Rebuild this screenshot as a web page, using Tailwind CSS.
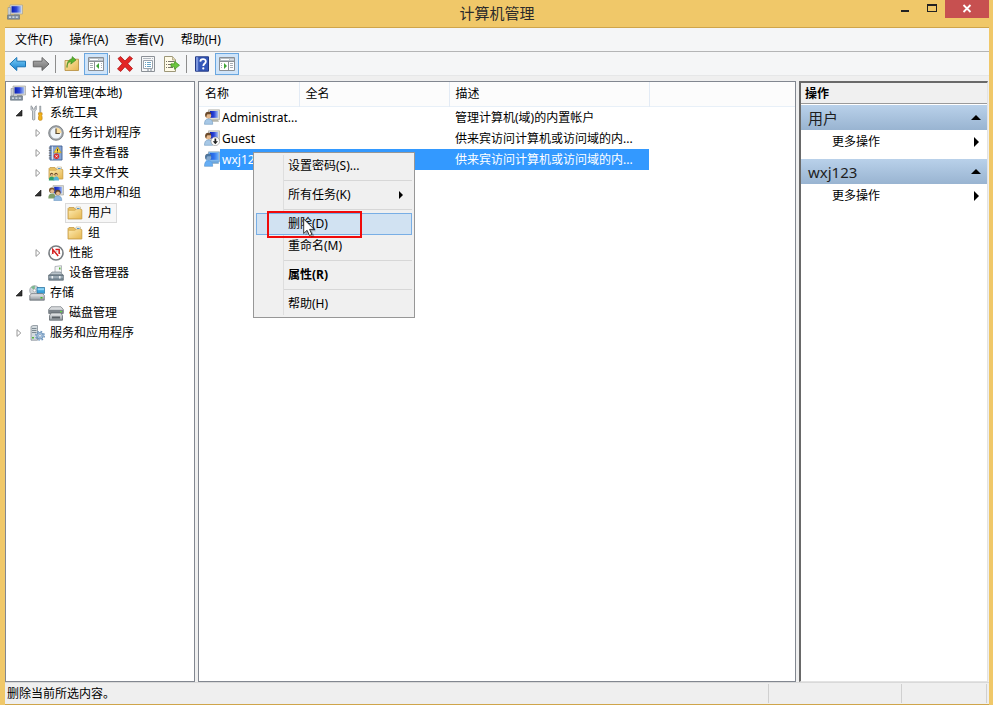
<!DOCTYPE html>
<html lang="zh-CN">
<head>
  <meta charset="UTF-8" />
  <meta name="viewport" content="width=device-width, initial-scale=1.0" />
  <title>计算机管理</title>
  <script src="https://cdn.jsdelivr.net/npm/@tailwindcss/browser@4"></script>
</head>
<body class="h-screen overflow-hidden bg-[#f0c869] font-['Noto_Sans','Noto_Sans_CJK_SC',sans-serif] text-xs text-black cursor-default">

  <!-- Shared icons -->
  <svg class="absolute w-0 h-0" aria-hidden="true">
    <defs>
      <linearGradient id="gScreen" x1="0" y1="0" x2="1" y2="0"><stop offset="0" stop-color="#0a1fb0" /><stop offset=".5" stop-color="#2b45d8" /><stop offset="1" stop-color="#a9c4f5" /></linearGradient>
      <linearGradient id="gFolder" x1="0" y1="0" x2="1" y2="1"><stop offset="0" stop-color="#fdeab0" /><stop offset="1" stop-color="#e6b750" /></linearGradient>
      <linearGradient id="gBlue" x1="0" y1="0" x2="0" y2="1"><stop offset="0" stop-color="#7fd0f7" /><stop offset="1" stop-color="#1580cf" /></linearGradient>
      <linearGradient id="gGray" x1="0" y1="0" x2="0" y2="1"><stop offset="0" stop-color="#b5b5b5" /><stop offset="1" stop-color="#6e6e6e" /></linearGradient>
      <linearGradient id="gMetal" x1="0" y1="0" x2="0" y2="1"><stop offset="0" stop-color="#f0f1f2" /><stop offset="1" stop-color="#8d949b" /></linearGradient>
    </defs>
    <symbol id="computer" viewBox="0 0 16 16">
      <path d="M3 1h12.5v9H3z" fill="#dcdcd4" stroke="#9b9b95" stroke-width=".6" />
      <path d="M4.5 2.2h9.8v6.4H4.5z" fill="url(#gScreen)" />
      <path d="M7 10h5l1 1.6H7z" fill="#a5a59c" />
      <path d="M1 3.5h2.6V11H1z" fill="#c9ced4" stroke="#858c94" stroke-width=".5" />
      <path d="M.5 11.2h12v4H.5z" fill="#8292a3" stroke="#5c6976" stroke-width=".6" />
      <path d="M2 13.2h2m1.4 0h2m1.4 0h2" stroke="#e8edf2" stroke-width="1.3" />
    </symbol>
    <symbol id="user" viewBox="0 0 16 16">
      <path d="M4.5 .8h11v9.8h-11z" fill="#deded6" stroke="#a0a098" stroke-width=".6" />
      <path d="M5.8 2h8.4v6.8H5.8z" fill="url(#gScreen)" />
      <path d="M8 10.800h6l1 2H8z" fill="#b4b4aa" />
      <path d="M.5 15.300c0-4 1.600-5.500 4-5.500s4.200 1.500 4.200 5.500z" fill="#a7c8e6" stroke="#6f97bd" stroke-width=".6" />
      <circle cx="4.300" cy="6.400" r="2.900" fill="#e6b98c" />
      <path d="M1.200 7C.6 3.800 2.500 2.500 4.500 2.700c1.800.1 2.900 1.200 2.600 2.600-2 .2-3-.4-3.900.2-.6.5-.5 2-1.100 3z" fill="#6a4a2c" />
    </symbol>
    <symbol id="folder" viewBox="0 0 16 16">
      <path d="M1 14V3.500l1-1h5l1.200 1.600H14l.8.8V14z" fill="#e7bf62" stroke="#bd9440" stroke-width=".7" />
      <path d="M9 2h4.500v4H9z" fill="#f8fafc" stroke="#b2a071" stroke-width=".5" />
      <path d="M10 3.500h2.600" stroke="#4b94d0" stroke-width="1" />
      <path d="M1.400 5.400h6.400l1.200-1h5.600v9.200H1.400z" fill="url(#gFolder)" stroke="#cfa54c" stroke-width=".5" />
    </symbol>
    <symbol id="open" viewBox="0 0 8 8"><path d="M7 1v6H1z" fill="#333" stroke="#111" stroke-width=".6" /></symbol>
    <symbol id="closed" viewBox="0 0 8 8"><path d="M2 .6L5.800 4 2 7.400z" fill="#fff" stroke="#8c8c8c" stroke-width=".9" /></symbol>
  </svg>

  <div class="h-full flex flex-col pl-[5px] pr-1">
    <!-- Title bar -->
    <header class="h-[27px] shrink-0 grid grid-cols-[1fr_auto_1fr] items-start">
      <svg class="w-4 h-4 ml-0.5 mt-1"><use href="#computer" /></svg>
      <h1 class="text-[15px] leading-[26px] text-[#2b2b2b]">计算机管理</h1>
      <div class="flex justify-end">
        <button aria-label="最小化" class="w-[27px] h-[18px] flex items-center justify-center"><svg class="w-3 h-3" viewBox="0 0 12 12"><path d="M2 7h8v2H2z" fill="#222" /></svg></button>
        <button aria-label="最大化" class="w-[27px] h-[18px] flex items-center justify-center"><svg class="w-3 h-3" viewBox="0 0 12 12"><path d="M1 1h10v8H1zM2 3v5h8V3z" fill="#222" fill-rule="evenodd" /></svg></button>
        <button aria-label="关闭" class="w-11 h-[18px] bg-[#c75050] flex items-center justify-center"><svg class="w-3 h-3" viewBox="0 0 12 12"><path d="M2.500 2l7 7m0-7l-7 7" stroke="#fff" stroke-width="1.800" /></svg></button>
      </div>
    </header>

    <div class="flex-1 min-h-0 flex flex-col bg-[#efefef] border-y border-[#cfa54a]">
      <!-- Menu bar -->
      <nav class="h-6 shrink-0 flex items-center gap-px bg-[#f5f6f7] border-b border-[#b4b5b6] pl-0.5">
        <button class="px-2">文件(F)</button>
        <button class="px-2">操作(A)</button>
        <button class="px-2">查看(V)</button>
        <button class="px-2">帮助(H)</button>
      </nav>

      <!-- Toolbar -->
      <div class="h-6 shrink-0 flex items-center bg-[#f5f6f7] border-b border-[#e6e7e8] pl-1">
        <button aria-label="后退" class="w-[23px]"><svg class="w-[18px] h-4" viewBox="0 0 18 16"><path d="M.8 8L7.800 1.500v3.700H16.500v5.600H7.800v3.700z" fill="url(#gBlue)" stroke="#1b74b4" stroke-width="1" stroke-linejoin="round" /></svg></button>
        <button aria-label="前进" class="w-[23px]"><svg class="w-[18px] h-4" viewBox="0 0 18 16"><path d="M17 8L10 1.500v3.700H1.300v5.600H10v3.700z" fill="url(#gGray)" stroke="#666" stroke-width="1" stroke-linejoin="round" /></svg></button>
        <span class="w-px h-[18px] bg-[#8d8d8d]"></span>
        <button aria-label="上移一级" class="w-7 flex justify-center pl-1"><svg class="w-4 h-4" viewBox="0 0 16 16"><path d="M1 14.500V4.500h5l1.200-1.300H14.500v11.300z" fill="url(#gFolder)" stroke="#b58d3c" stroke-width=".8" /><path d="M3 11.500C3 7.500 4.800 5.800 7.200 5.600L6.800 8.100 12 4 8.300.6l-.4 2.300C4.300 3.400 2.800 6.700 3 11.500z" fill="#58b430" stroke="#388317" stroke-width=".6" /></svg></button>
        <button aria-label="显示/隐藏控制台树" aria-pressed="true" class="w-6 h-[22px] flex items-center justify-center bg-[#cfe4f9] border border-[#6aa7e0]"><svg class="w-4 h-4" viewBox="0 0 16 16"><path d="M.5 1.500h15v13H.5z" fill="#fff" stroke="#8a8f94" /><path d="M1 2h14v3H1z" fill="#b9c0c7" /><path d="M2 3.500h8m1.500 0h1m1 0h1" stroke="#fff" /><path d="M1 5.500h14M6.500 6v8" stroke="#8a8f94" /><path d="M2 7.500h3M2 9.500h3M2 11.500h3M13 7.500h1M13 9.500h1M13 11.500h1" stroke="#a8adb3" /><path d="M11 7v6L8 10z" fill="#3fa535" /></svg></button>
        <span class="w-px h-[18px] bg-[#8d8d8d] ml-px"></span>
        <button aria-label="删除" class="w-[30px] flex justify-center"><svg class="w-[18px] h-[18px]" viewBox="0 0 18 18"><path d="M2 3.500L4.600 1.500 9 6l4.600-4.800L16.500 3.500 11.800 8.700l4.700 4.800L13.700 16.500 9 11.700l-4.300 4.800L1.500 14 6.200 8.700z" fill="#e32626" stroke="#ae1717" stroke-width=".8" stroke-linejoin="round" /></svg></button>
        <button aria-label="属性" class="w-[23px]"><svg class="w-4 h-4" viewBox="0 0 16 16"><path d="M1.500 .5h13v15h-13z" fill="#f6f7f8" stroke="#8b9096" /><path d="M3 2.500h8m1 0h1" stroke="#b2b8bf" /><path d="M3.500 4.500h9v8h-9z" fill="#fff" stroke="#9ba3ac" /><path d="M5 6.500h1m1 0h4m-6 2h1m1 0h4m-6 2h1m1 0h4" stroke="#6ca6c6" /><path d="M7 14h2m1 0h2" stroke="#7b8794" /></svg></button>
        <button aria-label="导出列表" class="w-[23px]"><svg class="w-[17px] h-4" viewBox="0 0 17 16"><path d="M1.500 .5H9.500L12.500 4v11.500h-11z" fill="#fffbe8" stroke="#9d9778" /><path d="M9.500 1v3H13" fill="#e8dfb9" stroke="#9d9778" stroke-width=".7" /><path d="M3 5.500h1m1 0h6m-8 3h1m1 0h5m-7 3h1m1 0h5" stroke="#77736a" /><path d="M8 7.800h3.500V5.300L16.500 9.300l-5 4v-2.500H8z" fill="#6cc63e" stroke="#3e8f1d" stroke-width=".7" /></svg></button>
        <span class="w-px h-[18px] bg-[#8d8d8d]"></span>
        <button aria-label="帮助" class="w-7 flex justify-center pl-0.5"><svg class="w-4 h-4" viewBox="0 0 16 16"><path d="M1.500 .8h13v14.400h-13z" fill="#3558b9" stroke="#233a85" /><path d="M2 1.200h2.200v13.600H2z" fill="#7d97dd" /><path d="M6.300 5.600c.1-3.400 5.500-3.300 5.500-.2C11.800 7.500 9.300 7.500 9.300 10" fill="none" stroke="#fff" stroke-width="1.800" /><circle cx="9.300" cy="12.400" r="1.100" fill="#fff" /></svg></button>
        <button aria-label="显示/隐藏操作窗格" aria-pressed="true" class="w-6 h-[22px] flex items-center justify-center bg-[#cfe4f9] border border-[#6aa7e0]"><svg class="w-4 h-4" viewBox="0 0 16 16"><path d="M.5 1.500h15v13H.5z" fill="#fff" stroke="#8a8f94" /><path d="M1 2h14v3H1z" fill="#b9c0c7" /><path d="M2 3.500h8m1.500 0h1m1 0h1" stroke="#fff" /><path d="M1 5.500h14M9.500 6v8" stroke="#8a8f94" /><path d="M11 7.500h3M11 9.500h3M11 11.500h3M2 7.500h1M2 9.500h1M2 11.500h1" stroke="#a8adb3" /><path d="M5 7v6l3-3z" fill="#3fa535" /></svg></button>
      </div>

      <main class="flex-1 min-h-0 flex gap-[3px] pt-[5px] pr-px">
        <!-- Console tree -->
        <aside class="w-[190px] shrink-0 bg-white border border-[#828790] pt-px">
          <ul class="leading-5">
            <li class="h-5 flex items-center gap-[5px] pl-1"><svg class="w-4 h-4"><use href="#computer" /></svg>计算机管理(本地)</li>
            <li class="h-5 flex items-center pl-[9px]">
              <svg class="w-2 h-2 mr-1.5"><use href="#open" /></svg>
              <svg class="w-4 h-4 mr-[5px]" viewBox="0 0 16 16"><path d="M2 .8v3.700l1.500 1.500v8.500q1.200 1.200 2.300 0V6l1.500-1.500V.8L5.900 2v2H3.500V2z" fill="#d4d7da" stroke="#7e858c" stroke-width=".7" /><path d="M10.600 1h1.300v6.500h-1.300z" fill="#aab0b6" stroke="#7e858c" stroke-width=".4" /><path d="M9.500 7.800h3.600v2l-.5 1 .5 1v2.700l-1 .8h-1.600l-1-.8v-2.700l.5-1-.5-1z" fill="#f2b21b" stroke="#b97b09" stroke-width=".6" /></svg>
              系统工具
            </li>
            <li class="h-5 flex items-center pl-7">
              <svg class="w-2 h-2 mr-1.5"><use href="#closed" /></svg>
              <svg class="w-4 h-4 mr-[5px]" viewBox="0 0 16 16"><circle cx="8" cy="8" r="7.300" fill="#a3a8ad" stroke="#6d7277" stroke-width=".8" /><circle cx="8" cy="8" r="5.500" fill="#eef4fa" /><path d="M8 8V2.500A5.500 5.500 0 0 1 13.500 8z" fill="#f9dda0" /><path d="M8 3.500V8.500h3.800" fill="none" stroke="#5a4a30" stroke-width="1.200" /></svg>
              任务计划程序
            </li>
            <li class="h-5 flex items-center pl-7">
              <svg class="w-2 h-2 mr-1.5"><use href="#closed" /></svg>
              <svg class="w-4 h-4 mr-[5px]" viewBox="0 0 16 16"><path d="M2 1h12v14H2z" fill="#88a6d4" stroke="#3f5e94" stroke-width=".9" /><path d="M4.500 1.500v13" stroke="#dce6f4" /><path d="M.8 3h2.400M.8 5.500h2.400M.8 8h2.400M.8 10.500h2.400M.8 13h2.400" stroke="#666" stroke-width=".9" /><path d="M9.500 1.800l3.800 6H5.800z" fill="#ffd83a" stroke="#b98a0b" stroke-width=".5" /><path d="M9.500 3.800v2.200m0 .6v.8" stroke="#222" stroke-width=".9" /><circle cx="8.500" cy="11.300" r="2.700" fill="#d92a2a" /><path d="M7.400 10.200l2.200 2.200m0-2.200l-2.200 2.200" stroke="#fff" stroke-width=".8" /></svg>
              事件查看器
            </li>
            <li class="h-5 flex items-center pl-7">
              <svg class="w-2 h-2 mr-1.5"><use href="#closed" /></svg>
              <svg class="w-4 h-4 mr-[5px]" viewBox="0 0 16 16"><use href="#folder" /><circle cx="3.600" cy="9.300" r="1.600" fill="#6b4c2b" /><circle cx="8" cy="9.300" r="1.600" fill="#6b4c2b" /><circle cx="3.800" cy="10" r="1.100" fill="#e9bd92" /><circle cx="8.200" cy="10" r="1.100" fill="#e9bd92" /><path d="M.8 15.500q0-4 2.900-4t2.700 4z" fill="#2ea06f" /><path d="M5.400 15.500q0-4 2.800-4t2.800 4z" fill="#56b4d6" /></svg>
              共享文件夹
            </li>
            <li class="h-5 flex items-center pl-7">
              <svg class="w-2 h-2 mr-1.5"><use href="#open" /></svg>
              <svg class="w-4 h-4 mr-[5px]" viewBox="0 0 16 16"><path d="M5 .6h10.500v9.400H5z" fill="#deded6" stroke="#a0a098" stroke-width=".6" /><path d="M6.200 1.800h8v6.500h-8z" fill="url(#gScreen)" /><circle cx="3.800" cy="5.300" r="2.800" fill="#7a5a36" /><circle cx="4.200" cy="6.200" r="1.900" fill="#e6b98c" /><path d="M.3 13.500q0-5 3.700-5t3.500 5z" fill="#7fa06b" /><circle cx="9.800" cy="7.600" r="2.800" fill="#5e4226" /><circle cx="10" cy="8.600" r="2" fill="#e6b98c" /><path d="M5.800 15.500q0-4.700 4-4.700t4 4.700z" fill="#8fb9e2" stroke="#5d8cba" stroke-width=".5" /></svg>
              本地用户和组
            </li>
            <li class="h-5 flex items-center pl-[59px]">
              <span class="h-5 flex items-center gap-[5px] pl-px pr-1 bg-[#f7f7f7] border border-[#dadada]"><svg class="w-4 h-4"><use href="#folder" /></svg>用户</span>
            </li>
            <li class="h-5 flex items-center gap-[5px] pl-[61px]"><svg class="w-4 h-4"><use href="#folder" /></svg>组</li>
            <li class="h-5 flex items-center pl-7">
              <svg class="w-2 h-2 mr-1.5"><use href="#closed" /></svg>
              <svg class="w-4 h-4 mr-[5px]" viewBox="0 0 16 16"><circle cx="8" cy="8" r="7" fill="#fff" stroke="#777c80" stroke-width="1.600" /><path d="M3.500 9.500A4.800 4.800 0 0 1 12.500 9.500" fill="none" stroke="#999" stroke-width=".8" stroke-dasharray="1 1" /><path d="M4.800 9V4.500l5.400 6.500M7.500 4.500h3.700V9" fill="none" stroke="#d51f1f" stroke-width="1.500" /></svg>
              性能
            </li>
            <li class="h-5 flex items-center pl-[42px]">
              <svg class="w-4 h-4 mr-[5px]" viewBox="0 0 16 16"><path d="M7 7.500V1.500L13.500.7V8z" fill="#f3f5f6" stroke="#969ca2" stroke-width=".7" /><path d="M11 2.500h1.500v2H11z" fill="#4fb42f" /><path d="M1.500 10L4 7h8.500l2.300 3z" fill="#b9c3cb" stroke="#69747e" stroke-width=".6" /><path d="M.7 10h14.600v5.200H.7z" fill="#7c8d9a" stroke="#4f5b66" stroke-width=".7" /><path d="M1 12h14" stroke="#c7d0d7" stroke-width=".8" /><path d="M3.500 11h1.600v2.500H3.500zM11 11h1.600v2.500H11z" fill="#eef1f3" /></svg>
              设备管理器
            </li>
            <li class="h-5 flex items-center pl-[9px]">
              <svg class="w-2 h-2 mr-1.5"><use href="#open" /></svg>
              <svg class="w-4 h-4 mr-[5px]" viewBox="0 0 16 16"><circle cx="5.500" cy="5.500" r="4.800" fill="#cfd6da" stroke="#8c9398" stroke-width=".7" /><path d="M5.500 5.500L2 2.300A4.800 4.800 0 0 1 6 .8z" fill="#7cb98e" /><circle cx="5.500" cy="5.500" r="1.400" fill="#fff" stroke="#888" stroke-width=".5" /><path d="M8 2.500h7.700v5.800H8z" fill="#3aa3dc" stroke="#2a6e98" stroke-width=".7" /><path d="M8.600 3.200h6.400v2H8.600z" fill="#8ed4f5" /><path d="M.8 10.500L2.500 8.700h11.200l1.600 1.800v4.700H.8z" fill="url(#gMetal)" stroke="#5f666d" stroke-width=".7" /><path d="M11.500 12h2v1.500h-2z" fill="#45b82a" /></svg>
              存储
            </li>
            <li class="h-5 flex items-center pl-[42px]">
              <svg class="w-4 h-4 mr-[5px]" viewBox="0 0 16 16"><path d="M.7 4.500L3 1.800h10l2.300 2.700v4H.7z" fill="url(#gMetal)" stroke="#666d73" stroke-width=".7" /><path d="M.7 5h14.600v3H.7z" fill="#7b8289" /><path d="M1.500 10.800L3 8h10l1.500 2.800v4.400h-13z" fill="url(#gMetal)" stroke="#555c63" stroke-width=".7" /><path d="M4 11.500h8v2H4z" fill="#5a6066" /><path d="M12 6h2v1.200h-2z" fill="#63d643" /></svg>
              磁盘管理
            </li>
            <li class="h-5 flex items-center pl-[9px]">
              <svg class="w-2 h-2 mr-1.5"><use href="#closed" /></svg>
              <svg class="w-4 h-4 mr-[5px]" viewBox="0 0 16 16"><path d="M2 1.500L4 .5h4.500v14.700H2z" fill="#d3dade" stroke="#78838b" stroke-width=".7" /><path d="M3 3.500h4.500M3 5.500h4.500M3 7.500h4.500" stroke="#7c8a93" /><path d="M3 12h2v1.500H3z" fill="#56b739" /><circle cx="11" cy="10.800" r="3.300" fill="#a9c4df" stroke="#5c83ab" stroke-width=".8" /><circle cx="11" cy="10.800" r="4.300" fill="none" stroke="#6f97bf" stroke-width="1.400" stroke-dasharray="1.700 1.680" /><circle cx="11" cy="10.800" r="1.300" fill="#fff" stroke="#5c83ab" stroke-width=".5" /></svg>
              服务和应用程序
            </li>
          </ul>
        </aside>

        <!-- User list -->
        <section class="flex-1 min-w-0 bg-white border border-[#828790] relative">
          <table class="w-full table-fixed border-collapse text-left">
            <thead>
              <tr class="h-6 bg-[#fcfcfc] border-b border-[#e8f0f8]">
                <th class="w-[100px] font-normal pl-1.5 py-0 border-r border-[#e3ebf5]">名称</th>
                <th class="w-[150px] font-normal pl-1.5 py-0 border-r border-[#e3ebf5]">全名</th>
                <th class="w-[200px] font-normal pl-1.5 py-0 border-r border-[#e3ebf5]">描述</th>
                <th class="p-0"></th>
              </tr>
            </thead>
            <tbody class="whitespace-nowrap leading-[21px]">
              <tr class="h-[21px]">
                <td class="p-0"><div class="flex items-center pl-[5px]"><svg class="w-4 h-4"><use href="#user" /></svg><span class="pl-0.5">Administrat...</span></div></td>
                <td class="p-0"></td>
                <td class="py-0 pl-1.5">管理计算机(域)的内置帐户</td>
                <td class="p-0"></td>
              </tr>
              <tr class="h-[21px]">
                <td class="p-0"><div class="flex items-center pl-[5px]"><svg class="w-4 h-4" viewBox="0 0 16 16"><use href="#user" /><circle cx="11.300" cy="11.300" r="4.300" fill="#fff" stroke="#888" stroke-width=".6" /><path d="M10.500 8.500h1.700v2.700H14L11.300 14.200 8.700 11.200h1.800z" fill="#222" /></svg><span class="pl-0.5">Guest</span></div></td>
                <td class="p-0"></td>
                <td class="py-0 pl-1.5">供来宾访问计算机或访问域的内...</td>
                <td class="p-0"></td>
              </tr>
              <tr class="h-[21px] text-white">
                <td class="p-0"><div class="flex items-center pl-[5px]"><svg class="w-4 h-4" viewBox="0 0 16 16"><use href="#user" /><path d="M4.500.8h11v9.800l-1 2H8.500l.2 2.700H.5q0-4.500 1.500-5.500L1 6q0-3 3.500-3.300z" fill="#3399ff" fill-opacity=".55" /></svg><span class="flex-1 pl-0.5 bg-[#3399ff]">wxj123</span></div></td>
                <td class="p-0 bg-[#3399ff]"></td>
                <td class="py-0 pl-1.5 bg-[#3399ff]">供来宾访问计算机或访问域的内...</td>
                <td class="p-0"></td>
              </tr>
            </tbody>
          </table>

          <!-- Context menu -->
          <div role="menu" class="absolute left-[54px] top-[70px] w-[162px] bg-[#f0f0f0] border border-[#979797] p-0.5 flex flex-col">
            <span class="absolute left-[29px] inset-y-0.5 w-px bg-[#dedede]"></span>
            <button role="menuitem" class="h-[22px] pl-8 text-left">设置密码(S)...</button>
            <hr class="ml-7 my-[3px] border-[#d7d7d7]" />
            <button role="menuitem" class="h-[22px] pl-8 pr-2 text-left flex items-center justify-between">所有任务(K)<svg class="w-1.5 h-2" viewBox="0 0 6 8"><path d="M1 0l4 4-4 4z" /></svg></button>
            <hr class="ml-7 my-[3px] border-[#d7d7d7]" />
            <button role="menuitem" class="relative h-[22px] pl-[31px] text-left bg-[#d1e2f2] border border-[#78aee5]">删除(D)</button>
            <button role="menuitem" class="h-[22px] pl-8 text-left">重命名(M)</button>
            <hr class="ml-7 my-[3px] border-[#d7d7d7]" />
            <button role="menuitem" class="h-[22px] pl-8 text-left font-bold">属性(R)</button>
            <hr class="ml-7 my-[3px] border-[#d7d7d7]" />
            <button role="menuitem" class="h-[22px] pl-8 text-left">帮助(H)</button>
            <!-- Highlight frame and pointer -->
            <span class="absolute left-[13px] top-[58px] w-[95px] h-[27px] border-2 border-[#f00a0a]"></span>
            <svg class="absolute left-[49px] top-[65px] w-[14px] h-[20px]" viewBox="0 0 14 20"><path d="M2.500 2.500v15l3.500-3 2.500 5 3-1.300-2.500-5h4z" fill="#000" fill-opacity=".25" /><path d="M.7 1v14.500l3.400-3.200 2.300 5.200 2.500-1.100-2.300-5h4.600z" fill="#fff" stroke="#222" stroke-width=".9" /></svg>
          </div>
        </section>

        <!-- Actions pane -->
        <aside class="w-[189px] shrink-0 bg-white border-l-2 border-t-2 border-l-[#696969] border-t-[#696969] border-b border-r border-b-[#e3e3e3] border-r-[#e3e3e3]">
          <h2 class="h-[21px] leading-[21px] pl-1 bg-[#f0f0f0] border-b border-[#9a9a9a] font-bold">操作</h2>
          <div class="mt-px">
            <button class="w-full h-[25px] pl-[7px] pr-1.5 flex items-center justify-between bg-linear-to-b from-[#b9d1ea] to-[#99b4d1] text-[15px] text-[#1e1e1e]">用户<svg class="w-[10px] h-[5px]" viewBox="0 0 10 5"><path d="M0 5l5-5 5 5z" /></svg></button>
            <button class="w-full h-6 mb-[5px] pl-[31px] pr-2 flex items-center justify-between">更多操作<svg class="w-[5px] h-[10px]" viewBox="0 0 5 10"><path d="M0 0l5 5-5 5z" /></svg></button>
          </div>
          <div>
            <button class="w-full h-[25px] pl-[7px] pr-1.5 flex items-center justify-between bg-linear-to-b from-[#b9d1ea] to-[#99b4d1] text-[15px] text-[#1e1e1e]">wxj123<svg class="w-[10px] h-[5px]" viewBox="0 0 10 5"><path d="M0 5l5-5 5 5z" /></svg></button>
            <button class="w-full h-6 pl-[31px] pr-2 flex items-center justify-between">更多操作<svg class="w-[5px] h-[10px]" viewBox="0 0 5 10"><path d="M0 0l5 5-5 5z" /></svg></button>
          </div>
        </aside>
      </main>

      <!-- Status bar -->
      <footer class="h-[22px] shrink-0 flex items-center border-t border-[#d9d9d9] pl-0.5 pr-0.5">
        <p class="flex-1">删除当前所选内容。</p>
        <span class="w-[133px] h-[19px] border-l border-[#d0d0d0]"></span>
        <span class="w-[86px] h-[19px] border-x border-[#d0d0d0]"></span>
      </footer>
    </div>
  </div>
</body>
</html>
